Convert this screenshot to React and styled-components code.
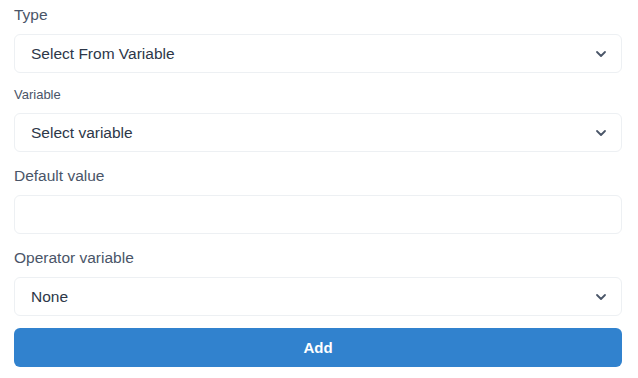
import styled, { createGlobalStyle } from 'styled-components';

const GlobalStyle = createGlobalStyle`
  body {
    margin: 0;
    background: #ffffff;
    font-family: "Liberation Sans", Arial, sans-serif;
  }
`;

const Form = styled.div`
  width: 608px;
  padding: 5px 16px 0 14px;
  display: flex;
  flex-direction: column;
`;

const Field = styled.div`
  display: flex;
  flex-direction: column;
  margin-top: ${(props) => props.gap || 0}px;
`;

const Label = styled.label`
  font-size: ${(props) => (props.small ? 13 : 15.5)}px;
  line-height: ${(props) => (props.small ? 18 : 20)}px;
  color: #4a5568;
  margin-bottom: 9px;
`;

const Box = styled.div`
  position: relative;
  height: 39px;
  box-sizing: border-box;
  border: 1px solid #edf0f3;
  border-radius: 6px;
  background: #fff;
  display: flex;
  align-items: center;
  padding: 0 16px;
  font-size: 15.5px;
  color: #2d3748;
`;

const Chevron = styled.svg`
  position: absolute;
  right: 14px;
  top: 50%;
  margin-top: -4px;
`;

const Button = styled.button`
  margin-top: 12px;
  height: 39px;
  border: none;
  border-radius: 6px;
  background: #3182ce;
  color: #ffffff;
  font-family: inherit;
  font-size: 15px;
  font-weight: 700;
`;

const Select = ({ value }) => (
  <Box>
    {value}
    <Chevron width="12" height="8" viewBox="0 0 12 8">
      <polyline points="2,2 6,6 10,2" fill="none" stroke="#4a5568" strokeWidth="1.8" strokeLinecap="round" strokeLinejoin="round" />
    </Chevron>
  </Box>
);

const App = () => {
  return (
    <>
      <GlobalStyle />
      <Form>
        <Field>
          <Label>Type</Label>
          <Select value="Select From Variable" />
        </Field>
        <Field gap={13}>
          <Label small>Variable</Label>
          <Select value="Select variable" />
        </Field>
        <Field gap={14}>
          <Label>Default value</Label>
          <Box />
        </Field>
        <Field gap={14}>
          <Label>Operator variable</Label>
          <Select value="None" />
        </Field>
        <Button>Add</Button>
      </Form>
    </>
  );
};

export default App;
